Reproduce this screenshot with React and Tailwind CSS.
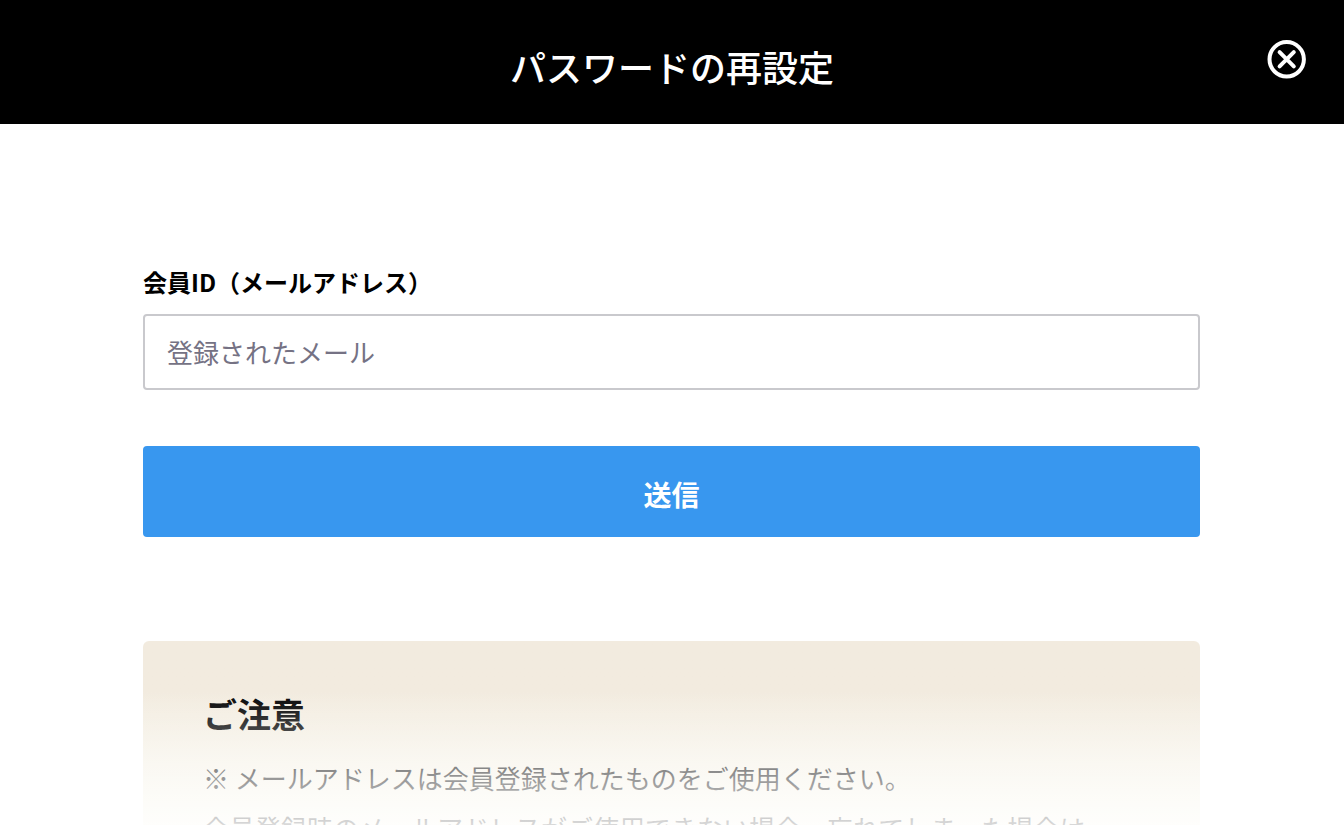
const notes = [
  '※ メールアドレスは会員登録されたものをご使用ください。',
  '会員登録時のメールアドレスがご使用できない場合、忘れてしまった場合は',
];

function CloseIcon() {
  return (
    <svg viewBox="0 0 40 40" className="size-10" fill="none" stroke="currentColor" aria-hidden="true">
      <circle cx="19.7" cy="20.3" r="17.2" strokeWidth="4" />
      <path d="M12.6 13.2 26.8 27.4M26.8 13.2 12.6 27.4" strokeWidth="4" strokeLinecap="round" />
    </svg>
  );
}

function Header() {
  return (
    <header className="relative flex shrink-0 items-center justify-center bg-black px-20 pt-10 pb-8 text-white">
      <h1 className="text-4xl leading-[52px] font-medium">パスワードの再設定</h1>
      <button type="button" aria-label="閉じる" className="absolute top-[39px] right-[37px]">
        <CloseIcon />
      </button>
    </header>
  );
}

function ResetForm() {
  return (
    <form className="flex shrink-0 flex-col" onSubmit={(e) => e.preventDefault()}>
      <label htmlFor="email" className="text-2xl leading-8 font-bold">
        会員ID（メールアドレス）
      </label>
      <input
        id="email"
        type="email"
        placeholder="登録されたメール"
        className="mt-4 h-[76px] w-full rounded-sm border-2 border-[#c9c9cd] bg-white px-[22px] pb-0.5 text-[26px] placeholder:text-[#757284]"
      />
      <button type="submit" className="mt-14 h-[91px] rounded-sm bg-[#3897ef] pt-1 text-[28px] font-bold text-white">
        送信
      </button>
    </form>
  );
}

function Notice() {
  return (
    <section className="relative mt-[104px] min-h-0 flex-1 overflow-hidden rounded-t-md bg-linear-to-b from-[#f2ebdf] from-27% to-[#f8f6ea] to-100% px-[60px] pt-12">
      <h2 className="text-[34px] leading-[50px] font-bold">ご注意</h2>
      <div className="mt-3.5 text-[26px] leading-[50px] whitespace-nowrap">
        {notes.map((note) => (
          <p key={note}>{note}</p>
        ))}
      </div>
      <div className="absolute inset-0 bg-linear-to-b from-white/0 from-27% via-white/60 via-75% to-white/85 to-100%" />
    </section>
  );
}

export default function App() {
  return (
    <div
      lang="ja"
      className="flex h-screen flex-col overflow-hidden bg-white font-['Noto_Sans_CJK_JP',sans-serif] text-black"
    >
      <Header />
      <main className="flex min-h-0 flex-1 flex-col pt-[142px] pr-36 pl-[143px]">
        <ResetForm />
        <Notice />
      </main>
    </div>
  );
}
